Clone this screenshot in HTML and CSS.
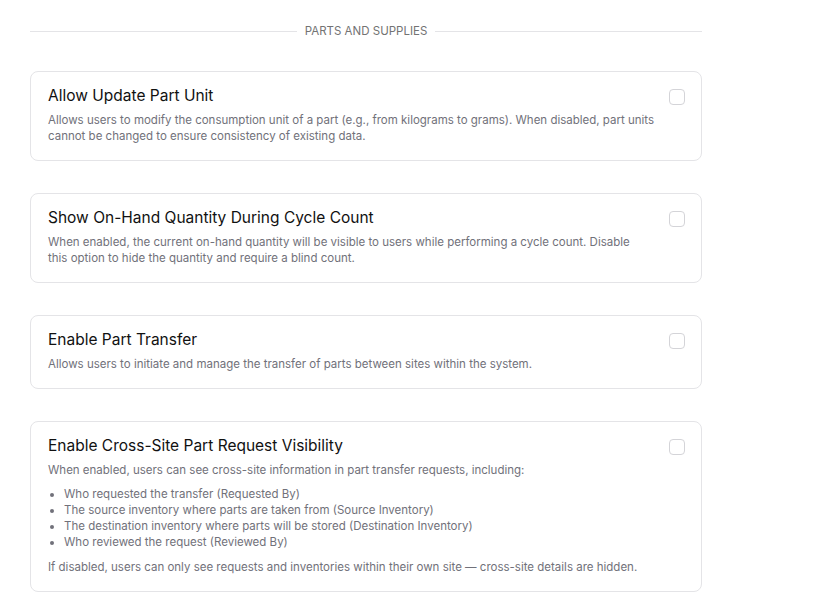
FILE: index.html
```html
<!DOCTYPE html>
<html lang="en">
<head>
    <meta charset="UTF-8">
    <meta name="viewport" content="width=device-width, initial-scale=1.0">
    <title>Settings - Parts and Supplies</title>
    <link rel="stylesheet" href="styles.css">
</head>
<body>

<div class="container">
    <!-- Section divider -->
    <div class="divider">
        <span>PARTS AND SUPPLIES</span>
    </div>

    <div class="setting-card">
        <div class="setting-text">
            <h3>Allow Update Part Unit</h3>
            <p>Allows users to modify the consumption unit of a part (e.g., from kilograms to grams). When disabled, part units cannot be changed to ensure consistency of existing data.</p>
        </div>
        <input type="checkbox" class="toggle-box">
    </div>

    <div class="setting-card">
        <div class="setting-text">
            <h3>Show On-Hand Quantity During Cycle Count</h3>
            <p>When enabled, the current on-hand quantity will be visible to users while performing a cycle count. Disable this&nbsp;option to hide the quantity and require a blind count.</p>
        </div>
        <input type="checkbox" class="toggle-box">
    </div>

    <div class="setting-card">
        <div class="setting-text">
            <h3>Enable Part Transfer</h3>
            <p>Allows users to initiate and manage the transfer of parts between sites within the system.</p>
        </div>
        <input type="checkbox" class="toggle-box">
    </div>

    <div class="setting-card">
        <div class="setting-text">
            <h3>Enable Cross-Site Part Request Visibility</h3>
            <p>When enabled, users can see cross-site information in part transfer requests, including:</p>
            <ul>
                <li>Who requested the transfer (Requested By)</li>
                <li>The source inventory where parts are taken from (Source Inventory)</li>
                <li>The destination inventory where parts will be stored (Destination Inventory)</li>
                <li>Who reviewed the request (Reviewed By)</li>
            </ul>
            <p class="note">If disabled, users can only see requests and inventories within their own site — cross-site details are hidden.</p>
        </div>
        <input type="checkbox" class="toggle-box">
    </div>
</div>

</body>
</html>
```

FILE: styles.css
```css
body {
    font-family: Inter, "Liberation Sans", Arial, sans-serif;
    margin: 0;
    padding: 0;
    background-color: #ffffff;
    color: #111111;
}

.container {
    width: 672px;
    margin-left: 30px;
    padding-top: 23px;
}

.divider {
    display: flex;
    align-items: center;
    gap: 8px;
    height: 16px;
    margin-bottom: 32px;
    font-size: 11.5px;
    color: #737373;
}

.divider::before,
.divider::after {
    content: "";
    flex: 1;
    height: 1px;
    background-color: #e4e4e7;
}

.setting-card {
    display: flex;
    align-items: flex-start;
    justify-content: space-between;
    border: 1px solid #e4e4e7;
    border-radius: 8px;
    padding: 14px 16px 16px 17px;
    margin-bottom: 32px;
}

.setting-text h3 {
    margin: 0;
    font-size: 15.5px;
    line-height: 20px;
    font-weight: 400;
    color: #111111;
}

.setting-text p {
    margin: 6px 0 0 0;
    font-size: 11.5px;
    line-height: 16px;
    color: #71717a;
    max-width: 612px;
}

.setting-text ul {
    margin: 8px 0 0 0;
    padding-left: 16px;
    font-size: 11.5px;
    line-height: 16px;
    color: #71717a;
}

.setting-text p.note {
    margin-top: 9px;
}

.toggle-box {
    appearance: none;
    -webkit-appearance: none;
    width: 16px;
    height: 16px;
    margin: 3px 0 0 0;
    border: 1px solid #d4d4d8;
    border-radius: 4px;
    background-color: #ffffff;
    flex-shrink: 0;
}
```
